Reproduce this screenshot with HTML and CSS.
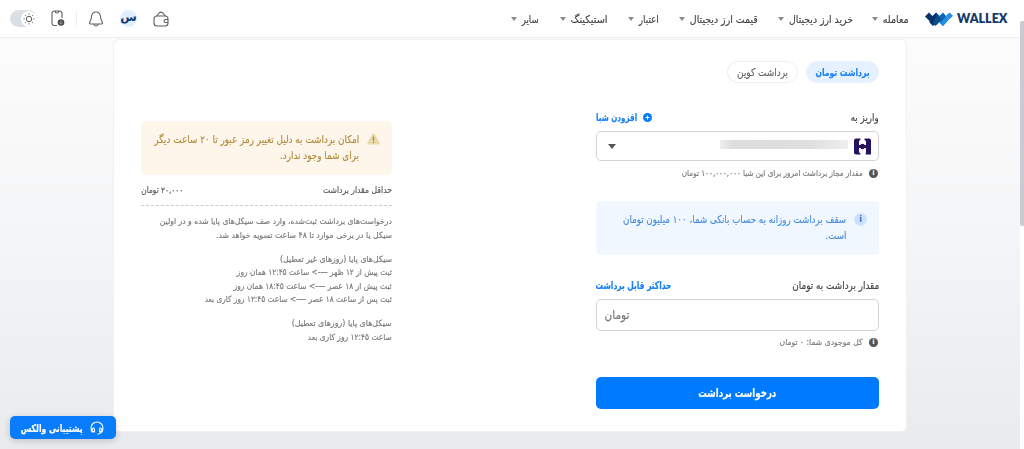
FILE: index.html
```
<!DOCTYPE html>
<html lang="fa">
<head>
<meta charset="utf-8">
<title>Wallex</title>
<link rel="stylesheet" href="styles.css">
</head>
<body>
<div class="page" dir="rtl">
<header class="header">
  <div class="logo" dir="ltr">
    <svg class="logo-mark" width="28" height="14" viewBox="0 0 28 14"><path fill="#0a3266" d="M0 4.500 4 .500 7.500 4 11 .500 14.500 4 10.500 7 12 10.500 8 14 4.500 10.500V9Z"/><path fill="#0b4c92" d="m11 .500 3.500 3.500 3 3-7 7L7.500 11 11 7Z"/><path fill="#0f66b8" d="M14.500 4 18 .500 21 4l3 3-6 7-4-4 3-3Z"/><path fill="#208fe8" d="M24.500 0.500 28 3.800 24.500 7.300 21 3.800ZM21 4.500 24 7.500 18 14l-3-3Z"/></svg>
    <span class="logo-text">WALLEX</span>
  </div>
  <nav class="nav">
    <a class="nav-item w1"><span class="t" data-w="26"><span>معامله</span></span><i class="caret"></i></a>
    <a class="nav-item w2"><span class="t" data-w="64"><span>خرید ارز دیجیتال</span></span><i class="caret"></i></a>
    <a class="nav-item w3"><span class="t" data-w="68"><span>قیمت ارز دیجیتال</span></span><i class="caret"></i></a>
    <a class="nav-item w4"><span class="t" data-w="20"><span>اعتبار</span></span><i class="caret"></i></a>
    <a class="nav-item w5"><span class="t" data-w="37"><span>استیکینگ</span></span><i class="caret"></i></a>
    <a class="nav-item w6"><span class="t" data-w="17"><span>سایر</span></span><i class="caret"></i></a>
  </nav>
  <div class="tools">
    <svg class="wallet" width="16" height="16" viewBox="0 0 16 16" fill="none" stroke="#5f5f5f" stroke-width="1.100"><path d="M4 5h8a3 3 0 0 1 3 3v4a3 3 0 0 1-3 3H4a3 3 0 0 1-3-3V8a3 3 0 0 1 3-3ZM3.500 5 6.500 1.700q1.500-1.200 3 0l3 3.300M15 8.500h-2.500a1.500 1.500 0 0 0 0 3H15"/></svg>
    <span class="avatar"><span>س</span></span>
    <svg class="bell" width="16" height="16" viewBox="0 0 16 16" fill="none" stroke="#5f5f5f" stroke-width="1.100"><path d="M8 1a4.500 4.500 0 0 0-4.500 4.500C3.500 9.500 1.500 10 1.500 12q0 1 1.200 1h10.600q1.200 0 1.200-1c0-2-2-2.500-2-6.500A4.500 4.500 0 0 0 8 1ZM5.800 13.500q2.200 3 4.400 0"/></svg>
    <i class="sep"></i>
    <svg class="phone" width="14" height="17" viewBox="0 0 14 17" fill="none" stroke="#5f5f5f" stroke-width="1.100"><path d="M6 15.500H3.500A2.500 2.500 0 0 1 1 13V3.500A2.500 2.500 0 0 1 3.500 1h5A2.500 2.500 0 0 1 11 3.500V8M4.200 1.500q0 1.500 1.800 1.500t1.800-1.500"/><circle cx="10" cy="12.500" r="3.300" fill="#4e4e4e" stroke="none"/><path stroke="#aaa" stroke-width=".8" d="M10 10.700v3.300m-1.300-1.200 1.300 1.300 1.300-1.300"/></svg>
    <span class="toggle"><svg width="16" height="16" viewBox="0 0 16 16" fill="none" stroke="#5d5d5d"><circle cx="8" cy="8" r="2.700"/><path stroke-width=".9" d="M8 2.500v1.300M8 12.200v1.300M2.500 8h1.300M12.200 8h1.300M4.100 4.100l.9.900M11 11l.9.900M4.100 11.900 5 11M11 5l.9-.9"/></svg></span>
  </div>
</header>
<main class="card">
  <section class="form">
    <div class="tabs">
      <span class="tab active"><span class="t" data-w="54"><span>برداشت تومان</span></span></span>
      <span class="tab"><span class="t" data-w="51"><span>برداشت کوین</span></span></span>
    </div>
    <div class="row first">
      <span class="t" data-w="28"><span>واریز به</span></span>
      <a class="link"><svg width="9" height="9" viewBox="0 0 9 9"><circle cx="4.500" cy="4.500" r="4.500" fill="#087cfa"/><path d="M4.500 2.500v4m-2-2h4" stroke="#fff"/></svg><span class="t" data-w="41"><span>افزودن شبا</span></span></a>
    </div>
    <div class="select">
      <svg width="17" height="17" viewBox="0 0 17 17" fill="#26135f"><path d="M2 .5h4.500v1.200Q5 2.200 5 4v3h1.200a3.200 3.200 0 0 1 4.600 0H12V4q0-1.500-1.500-2V.5H15a2 2 0 0 1 2 2v14h-5.500Q12 15 12 13.500V10h-1.200a3.200 3.200 0 0 1-4.600 0H5v3.500q0 1.500 1.500 2v1H2a2 2 0 0 1-2-2V2.500a2 2 0 0 1 2-2Z"/></svg>
      <span class="masked"></span>
      <i class="caret big"></i>
    </div>
    <div class="hint"><i class="info">i</i><span class="t" data-w="181"><span>مقدار مجاز برداشت امروز برای این شبا ۱۰۰,۰۰۰,۰۰۰ تومان</span></span></div>
    <div class="notice blue">
      <i class="badge">i</i>
      <div class="lines"><span class="t" data-w="223"><span>سقف برداشت روزانه به حساب بانکی شما، ۱۰۰ میلیون تومان</span></span><span class="t" data-w="21"><span>است.</span></span></div>
    </div>
    <div class="row second">
      <span class="t" data-w="87"><span>مقدار برداشت به تومان</span></span>
      <a class="link"><span class="t" data-w="76"><span>حداکثر قابل برداشت</span></span></a>
    </div>
    <div class="input"><span class="t" data-w="25"><span>تومان</span></span></div>
    <div class="hint second-hint"><i class="info">i</i><span class="t" data-w="83"><span>کل موجودی شما: ۰ تومان</span></span></div>
    <div class="submit"><span class="t" data-w="78"><span>درخواست برداشت</span></span></div>
  </section>
  <aside class="side">
    <div class="notice amber">
      <svg width="13" height="12" viewBox="0 0 13 12"><path d="M5.300 1.100q1.200-1.600 2.400 0l4.800 8.500q.7 1.900-1.200 1.900H1.700Q-.2 11.500.5 9.600Z" fill="#ead9ab"/><path d="M6.500 3.500v4.200m0 1v1.300" stroke="#a68337" stroke-width="1.200"/></svg>
      <div class="lines"><span class="t" data-w="205"><span>امکان برداشت به دلیل تغییر رمز عبور تا ۲۰ ساعت دیگر</span></span><span class="t" data-w="79"><span>برای شما وجود ندارد.</span></span></div>
    </div>
    <div class="minimum"><span class="t" data-w="69"><span>حداقل مقدار برداشت</span></span><span class="t" data-w="42"><span>۲۰,۰۰۰ تومان</span></span></div>
    <div class="text">
      <p><span class="t" data-w="232"><span>درخواست‌های برداشت ثبت‌شده، وارد صف سیکل‌های پایا شده و در اولین</span></span><span class="t" data-w="176"><span>سیکل یا در برخی موارد تا ۴۸ ساعت تسویه خواهد شد.</span></span></p>
      <p><span class="t" data-w="112"><span>سیکل‌های پایا (روزهای غیر تعطیل)</span></span><span class="t" data-w="155"><span>ثبت پیش از ۱۲ ظهر —-&gt; ساعت ۱۲:۴۵ همان روز</span></span><span class="t" data-w="158"><span>ثبت پیش از ۱۸ عصر —-&gt; ساعت ۱۸:۴۵ همان روز</span></span><span class="t" data-w="187"><span>ثبت پس از ساعت ۱۸ عصر —-&gt; ساعت ۱۲:۴۵ روز کاری بعد</span></span></p>
      <p><span class="t" data-w="100"><span>سیکل‌های پایا (روزهای تعطیل)</span></span><span class="t" data-w="84"><span>ساعت ۱۲:۴۵ روز کاری بعد</span></span></p>
    </div>
  </aside>
</main>
<div class="support"><svg width="14" height="14" viewBox="0 0 14 14" fill="none" stroke="#fff" stroke-width="1.100"><path d="M2.500 11.500Q1 9.800 1 7a6 6 0 0 1 12 0q0 3-1.700 4.500-1.300 1.500-3.800 1.800M2 9q0-2 2-2 .5 2 .5 4-2 0-2.500-2Zm10 0q0-2-2-2-.5 2-.5 4 2 0 2.500-2Z"/></svg><span class="t" data-w="62"><span>پشتیبانی والکس</span></span></div>
<div class="scroll-track"><i class="scroll-thumb"></i></div>
</div>
<script src="fit.js"></script>
</body>
</html>
```
FILE: styles.css
```
* { box-sizing: border-box; }
html { background: #eaebed; overflow: hidden; }
body { margin: 0; }
.page {
  position: relative;
  height: 449px;
  overflow: clip;
  display: flex;
  flex-direction: column;
  background: linear-gradient(#fcfcfd 38px, #f4f5f6 240px, #eaebed 440px);
  font-family: "DejaVu Sans", sans-serif;
  font-size: 10.500px;
  color: #444;
}
svg { flex: none; display: block; }
.t { display: block; flex: none; white-space: nowrap; }
.t > span { display: inline-block; transform-origin: right center; -webkit-text-stroke: .15px currentColor; }
.header {
  height: 38px;
  flex: none;
  display: flex;
  align-items: center;
  padding: 0 16px 0 10px;
  background: #fff;
  border-bottom: 1px solid #ececee;
}
.logo { display: flex; align-items: center; gap: 4px; width: 83px; }
.logo-text { font: 800 12.500px/15px Lato, sans-serif; color: #153a6b; width: 51px; white-space: nowrap; }
.nav { display: flex; margin-right: 16px; }
.nav-item { display: flex; align-items: center; gap: 5px; flex: none; line-height: 18px; }
.w1 { width: 56.500px; }
.w2 { width: 95px; }
.w3 { width: 98.500px; }
.w4 { width: 51.500px; }
.w5 { width: 68.500px; }
.caret { flex: none; border: 3.500px solid transparent; border-top: 4px solid #8b8b8b; border-bottom: 0; }
.caret.big { border-width: 5px 4.500px 0; border-top-color: #555; }
.tools { display: flex; align-items: center; margin-right: auto; }
.wallet { margin-left: 4px; }
.avatar { width: 17px; height: 17px; margin-right: 12px; border-radius: 50%; background: #e0efff; color: #153a70; font-weight: 700; font-size: 12px; line-height: 15px; display: flex; justify-content: center; }
.bell { margin-right: 16px; }
.sep { width: 1px; height: 16px; background: #eee; margin-right: 11px; }
.phone { margin-right: 11px; }
.toggle { width: 27px; height: 17px; margin-right: 14px; border-radius: 9px; background: #dcdfe6; display: flex; justify-content: flex-start; }
.toggle svg { background: #fff; border-radius: 50%; margin: .5px; }
.card {
  width: 794px;
  height: 393px;
  flex: none;
  margin: 1px 117px 0 0;
  padding: 0 27px;
  display: flex;
  justify-content: space-between;
  background: #fff;
  border: 1px solid #f1f1f3;
  border-radius: 6px;
}
.form { width: 283px; }
.tabs { display: flex; gap: 8px; margin-top: 21px; }
.tab { height: 22px; width: 71px; display: flex; justify-content: center; align-items: center; border: 1px solid #eee; border-radius: 11px; color: #666; }
.tab.active { width: 73px; background: #e5f1ff; border-color: #e5f1ff; color: #1c83ef; font-weight: 700; }
.row { display: flex; justify-content: space-between; align-items: center; height: 18px; }
.first { margin-top: 25px; }
.link { display: flex; align-items: center; gap: 6px; color: #1780f5; font-weight: 700; }
.select { height: 30px; margin-top: 5px; display: flex; align-items: center; padding: 0 7px 0 11px; border: 1px solid #d4d4d4; border-radius: 5px; }
.masked { width: 128px; height: 9px; margin: -4px 6px 0 0; background: linear-gradient(to left, #eee, #dfdfdf 30%, #ddd 90%, #eee); filter: blur(.6px); }
.select .caret { margin-right: auto; }
.hint { height: 14px; display: flex; align-items: center; gap: 6px; padding-right: 1px; margin-top: 5px; font-size: 8.500px; color: #777; }
.info { flex: none; width: 9px; height: 9px; border-radius: 50%; background: #555; color: #fff; font: 700 7px/9px "DejaVu Sans", sans-serif; text-align: center; }
.notice { height: 54px; display: flex; align-items: flex-start; border-radius: 5px; }
.lines { line-height: 16px; }
.blue { margin-top: 21px; padding: 10px 12px; gap: 8px; background: #f0f7ff; color: #468de0; }
.badge { width: 13px; height: 13px; margin-top: 2px; flex: none; border-radius: 50%; background: #cce3ff; font: 700 8px/13px "DejaVu Sans", sans-serif; text-align: center; color: #2878ca; }
.second { margin-top: 21px; }
.input { height: 32px; margin-top: 5px; display: flex; align-items: center; justify-content: flex-end; border: 1px solid #d4d4d4; border-radius: 5px; padding-left: 7px; font-size: 12px; color: #777; }
.second-hint { margin-top: 4px; }
.submit { height: 32px; margin-top: 28px; background: #007aff; color: #fff; border-radius: 5px; display: flex; align-items: center; justify-content: center; font-weight: 700; font-size: 11.500px; }
.side { width: 251px; padding-top: 81px; }
.amber { padding: 10px 12px; gap: 8px; background: #fef6ea; color: #b48a3e; }
.amber svg { margin-top: 2px; }
.minimum { height: 31px; display: flex; justify-content: space-between; align-items: center; border-bottom: 1px dashed #ccc; font-size: 9px; color: #555; }
.text { font-size: 8.500px; line-height: 13.500px; color: #777; margin-top: 9px; }
.text p { margin: 0 0 10.500px; }
.support {
  position: absolute;
  left: 10px;
  top: 416px;
  width: 106px;
  height: 23px;
  display: flex;
  align-items: center;
  gap: 7px;
  padding-right: 12px;
  border-radius: 5px;
  background: #087cfb;
  color: #fff;
  font-weight: 700;
  box-shadow: 0 2px 7px rgba(0, 0, 0, .18);
}
.scroll-track { position: absolute; right: 0; top: 0; width: 4px; height: 449px; padding-top: 21px; background: #fff; }
.scroll-thumb { display: block; height: 205px; background: #c9cbd1; border-radius: 2px 0 0 2px; }
```
FILE: fit.js
```
// Fits every label to its column width, keeping its right edge.
document.querySelectorAll('.t').forEach(function (el) {
  var inner = el.firstElementChild;
  var natural = inner.getBoundingClientRect().width;
  var target = Number(el.dataset.w);
  el.style.width = target + 'px';
  inner.style.transform = 'scaleX(' + target / natural + ')';
});
```
